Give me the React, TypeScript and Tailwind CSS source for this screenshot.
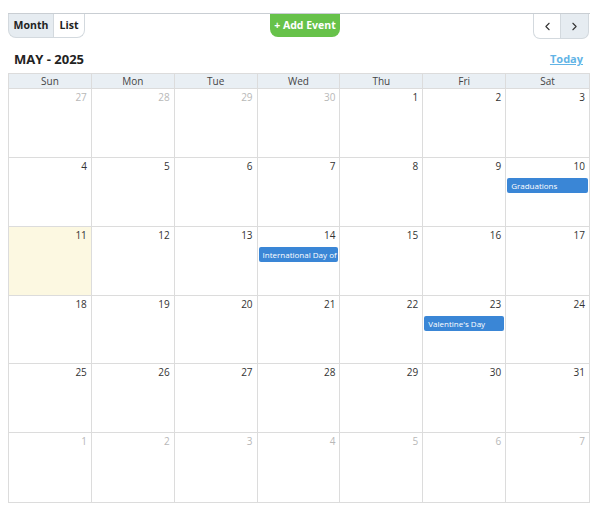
import React from "react";
import { ChevronLeft, ChevronRight } from "lucide-react";

const DAYS = ["Sun", "Mon", "Tue", "Wed", "Thu", "Fri", "Sat"];

interface Cell {
  day: number;
  inMonth: boolean;
  today?: boolean;
  event?: string;
}

const buildCells = (): Cell[] => {
  const cells: Cell[] = [];
  [27, 28, 29, 30].forEach((d) => cells.push({ day: d, inMonth: false }));
  for (let d = 1; d <= 31; d++) cells.push({ day: d, inMonth: true });
  for (let d = 1; d <= 7; d++) cells.push({ day: d, inMonth: false });
  const events: Record<number, string> = {
    10: "Graduations",
    14: "International Day of Families",
    23: "Valentine's Day",
  };
  return cells.map((c) =>
    c.inMonth
      ? { ...c, today: c.day === 11, event: events[c.day] }
      : c
  );
};

const App: React.FC = () => {
  const cells = buildCells();
  const weeks: Cell[][] = [];
  for (let i = 0; i < cells.length; i += 7) weeks.push(cells.slice(i, i + 7));

  return (
    <div
      className="w-[600px] h-[513px] bg-white px-2 pt-[13px] text-[#333]"
      style={{ fontFamily: '"Open Sans", "Noto Sans", sans-serif' }}
    >
      <div className="grid grid-cols-3 items-start border-t border-[#c9ced3] w-[582px]">
        <div className="flex">
          <button className="h-[24px] w-[45px] bg-[#e6ecf1] border-l border-b border-[#d3d9de] rounded-bl-[8px] text-[10.5px] font-bold text-[#222]">
            Month
          </button>
          <button className="h-[24px] w-[32px] bg-white border border-t-0 border-[#d3d9de] rounded-br-[8px] text-[10.5px] font-bold text-[#222]">
            List
          </button>
        </div>
        <div className="flex justify-center">
          <button className="ml-[12px] h-[23px] w-[70px] bg-[#67c24a] rounded-b-[8px] text-white text-[10.5px] font-bold">
            + Add Event
          </button>
        </div>
        <div className="flex justify-end pr-[1px]">
          <button className="h-[25px] w-[28px] flex items-center justify-center bg-white border border-t-0 border-[#d3d9de] rounded-bl-[7px]">
            <ChevronLeft size={13} strokeWidth={2} className="text-[#333]" />
          </button>
          <button className="h-[25px] w-[28px] flex items-center justify-center bg-[#e6ecf1] border border-t-0 border-l-0 border-[#d3d9de] rounded-br-[7px]">
            <ChevronRight size={13} strokeWidth={2} className="text-[#333]" />
          </button>
        </div>
      </div>

      <div className="flex items-center justify-between w-[582px] mt-[12px] h-[17px] pl-[6px] pr-[7px]">
        <h2 className="text-[13px] font-bold text-[#222]">MAY - 2025</h2>
        <a className="text-[11px] font-bold text-[#62b4e6] underline">Today</a>
      </div>

      <div className="w-[582px] mt-[5px] border border-[#dcdcdc]">
        <div className="grid grid-cols-7 bg-[#e9eff4] h-[15px] border-b border-[#dcdcdc]">
          {DAYS.map((d, i) => (
            <div
              key={d}
              className={`text-center text-[10px] leading-[15px] text-[#444] ${
                i < 6 ? "border-r border-[#dcdcdc]" : ""
              }`}
            >
              {d}
            </div>
          ))}
        </div>
        {weeks.map((week, wi) => (
          <div
            key={wi}
            className={`grid grid-cols-7 ${wi === 3 ? "h-[68px]" : "h-[69px]"} ${
              wi < weeks.length - 1 ? "border-b border-[#dcdcdc]" : ""
            }`}
          >
            {week.map((c, ci) => (
              <div
                key={ci}
                className={`relative flex flex-col min-w-0 ${
                  ci < 6 ? "border-r border-[#dcdcdc]" : ""
                } ${c.today ? "bg-[#fcf8e1]" : ""}`}
              >
                <div
                  className={`text-right pr-[4px] pt-[1px] text-[10px] leading-[15px] ${
                    c.inMonth ? "text-[#333]" : "text-[#b8b8b8]"
                  }`}
                >
                  {c.day}
                </div>
                {c.event && (
                  <div className="mx-[1px] mt-[4px] h-[15px] bg-[#3a86d6] rounded-[2px] px-[4px] text-white text-[8px] leading-[15px] whitespace-nowrap overflow-hidden">
                    {c.event}
                  </div>
                )}
              </div>
            ))}
          </div>
        ))}
      </div>
    </div>
  );
};

export default App;
